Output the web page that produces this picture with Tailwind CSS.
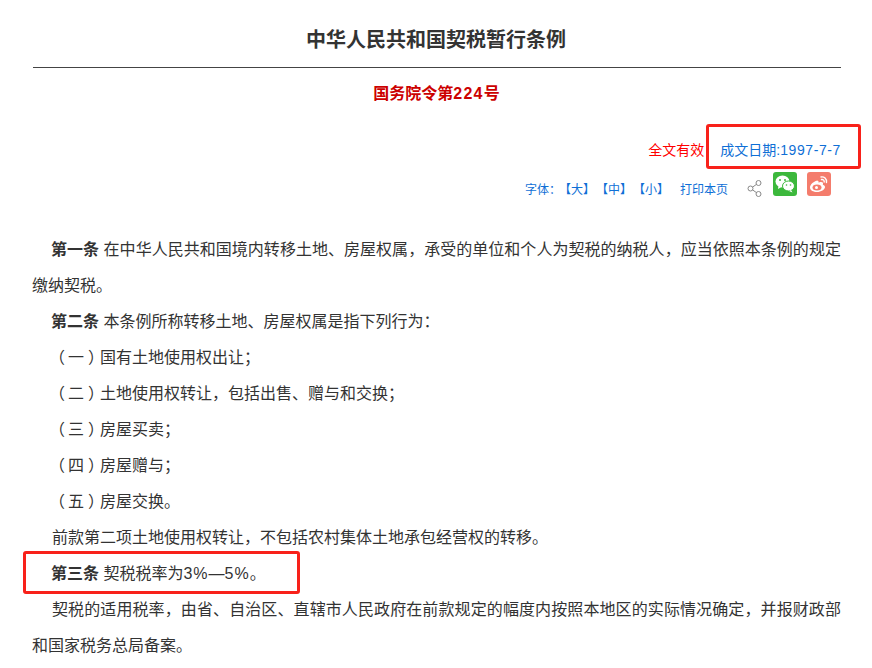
<!DOCTYPE html>
<html lang="zh-CN">
<head>
    <meta charset="UTF-8">
    <title>中华人民共和国契税暂行条例</title>
    <script src="https://cdn.jsdelivr.net/npm/@tailwindcss/browser@4"></script>
</head>
<body class="bg-white font-['Liberation_Sans','Noto_Sans_CJK_SC',sans-serif] text-[#333] overflow-hidden">
    <div class="relative h-[668px] w-[872px] overflow-hidden">
        <main class="ml-[32px] w-[809px]">
            <!-- 标题 -->
            <h1 class="ml-[1px] h-[68px] border-b border-[#444] pt-[25px] pr-[2px] text-center text-[20px] leading-[30px] font-bold text-[#333]">中华人民共和国契税暂行条例</h1>
            <h2 class="mt-[15px] text-center text-[16px] leading-[22px] font-bold text-[#c00]">国务院令第<span class="tracking-[1.3px]">224</span>号</h2>

            <div class="mt-[33px] flex justify-end text-[14px] leading-[24px]">
                <span class="text-[#f00]">全文有效</span>
                <span class="ml-[16px] text-[#0f6fd6]">成文日期:<span class="tracking-[0.6px]">1997-7-7</span></span>
            </div>

            <!-- 工具栏 -->
            <div class="mt-[9px] flex h-[34px] items-start text-[12px] text-[#0f6fd6]">
                <div class="ml-[493px] flex items-center pt-[9px] leading-[20px]">
                    <span>字体<span class="font-['Noto_Sans_CJK_TC'] leading-none">：</span></span>
                    <span class="ml-[-2px]">【大】</span>
                    <span class="ml-[1px]">【中】</span>
                    <span class="ml-[1px]">【小】</span>
                    <span class="ml-[11px]">打印本页</span>
                </div>
                <svg class="mt-[9px] ml-[19px]" width="16" height="17" viewBox="0 0 16 17" fill="none" stroke="#888" stroke-width="1">
                    <circle cx="3.500" cy="8.500" r="2.500"/>
                    <circle cx="11.500" cy="3" r="2.500"/>
                    <circle cx="11.500" cy="14" r="2.500"/>
                    <path d="M5.600 7.100 9.400 4.400M5.600 9.900l3.800 2.700"/>
                </svg>
                <div class="mt-[1px] ml-[10px] flex size-[24px] items-center justify-center rounded-[3px] bg-[#3cb83c]">
                    <svg width="20" height="18" viewBox="0 0 20 18" fill="#fff">
                        <ellipse cx="7.500" cy="6.500" rx="7" ry="6"/>
                        <path d="M3.500 10.500 3 14l3.500-2z"/>
                        <ellipse cx="13.500" cy="11" rx="6" ry="5" stroke="#3cb83c" stroke-width="1"/>
                        <path d="M16 15l1.500 2.500-3.500-1.500z"/>
                        <circle cx="5" cy="5" r="1" fill="#3cb83c"/>
                        <circle cx="10" cy="5" r="1" fill="#3cb83c"/>
                        <circle cx="11.500" cy="10" r="0.800" fill="#3cb83c"/>
                        <circle cx="15.500" cy="10" r="0.800" fill="#3cb83c"/>
                    </svg>
                </div>
                <div class="mt-[1px] ml-[10px] flex size-[24px] items-center justify-center rounded-[3px] bg-[#f47c6c]">
                    <svg width="20" height="18" viewBox="0 0 20 18" fill="none">
                        <path d="M8.500 5.500C5 6 1 9.500 1 12.500 1 15.500 4.500 17 8 17c4 0 8-2.500 8-5 0-1.500-1.500-2-2.200-2.300.6-1.500.3-2.700-1.800-2.700-1 0-2 .4-2.500.6.300-1.600-.3-2.300-2-2.100z" fill="#fff"/>
                        <ellipse cx="8" cy="12.500" rx="4.500" ry="3" fill="#f47c6c"/>
                        <circle cx="7.500" cy="12.500" r="1.500" fill="#fff"/>
                        <path d="M12 2c3-.5 6 1.500 5.500 5.500M12.500 4.500c1.500-.3 3 .7 2.700 2.500" stroke="#fff" stroke-width="1.400" stroke-linecap="round"/>
                    </svg>
                </div>
            </div>

            <!-- 正文 -->
            <article class="mt-[27px] text-justify text-[16px] leading-[36px] text-[#333]">
                <p class="indent-[19px]"><b>第一条</b> 在中华人民共和国境内转移土地、房屋权属<span class="font-['Noto_Sans_CJK_TC'] leading-none">，</span>承受的单位和个人为契税的纳税人<span class="font-['Noto_Sans_CJK_TC'] leading-none">，</span>应当依照本条例的规定缴纳契税。</p>
                <p class="indent-[19px]"><b>第二条</b> 本条例所称转移土地、房屋权属是指下列行为<span class="font-['Noto_Sans_CJK_TC'] leading-none">：</span></p>
                <p class="indent-[20px]"><span class="relative left-[-3px]">（</span>一<span class="relative left-[4px]">）</span>国有土地使用权出让<span class="font-['Noto_Sans_CJK_TC'] leading-none">；</span></p>
                <p class="indent-[20px]"><span class="relative left-[-3px]">（</span>二<span class="relative left-[4px]">）</span>土地使用权转让<span class="font-['Noto_Sans_CJK_TC'] leading-none">，</span>包括出售、赠与和交换<span class="font-['Noto_Sans_CJK_TC'] leading-none">；</span></p>
                <p class="indent-[20px]"><span class="relative left-[-3px]">（</span>三<span class="relative left-[4px]">）</span>房屋买卖<span class="font-['Noto_Sans_CJK_TC'] leading-none">；</span></p>
                <p class="indent-[20px]"><span class="relative left-[-3px]">（</span>四<span class="relative left-[4px]">）</span>房屋赠与<span class="font-['Noto_Sans_CJK_TC'] leading-none">；</span></p>
                <p class="indent-[20px]"><span class="relative left-[-3px]">（</span>五<span class="relative left-[4px]">）</span>房屋交换。</p>
                <p class="indent-[20px]">前款第二项土地使用权转让<span class="font-['Noto_Sans_CJK_TC'] leading-none">，</span>不包括农村集体土地承包经营权的转移。</p>
                <p class="indent-[19px]"><b>第三条</b> 契税税率为<span class="tracking-[1px]">3%</span>—<span class="tracking-[1px]">5%</span>。</p>
                <p class="indent-[20px]">契税的适用税率<span class="font-['Noto_Sans_CJK_TC'] leading-none">，</span>由省、自治区、直辖市人民政府在前款规定的幅度内按照本地区的实际情况确定<span class="font-['Noto_Sans_CJK_TC'] leading-none">，</span>并报财政部和国家税务总局备案。</p>
            </article>
        </main>

        <!-- 红色标注框 -->
        <div class="absolute top-[124px] left-[706px] h-[45px] w-[155px] rounded-[3px] border-[3px] border-[#f8211a]"></div>
        <div class="absolute top-[551px] left-[23px] h-[43px] w-[277px] rounded-[3px] border-[3px] border-[#f8211a]"></div>
    </div>
</body>
</html>
